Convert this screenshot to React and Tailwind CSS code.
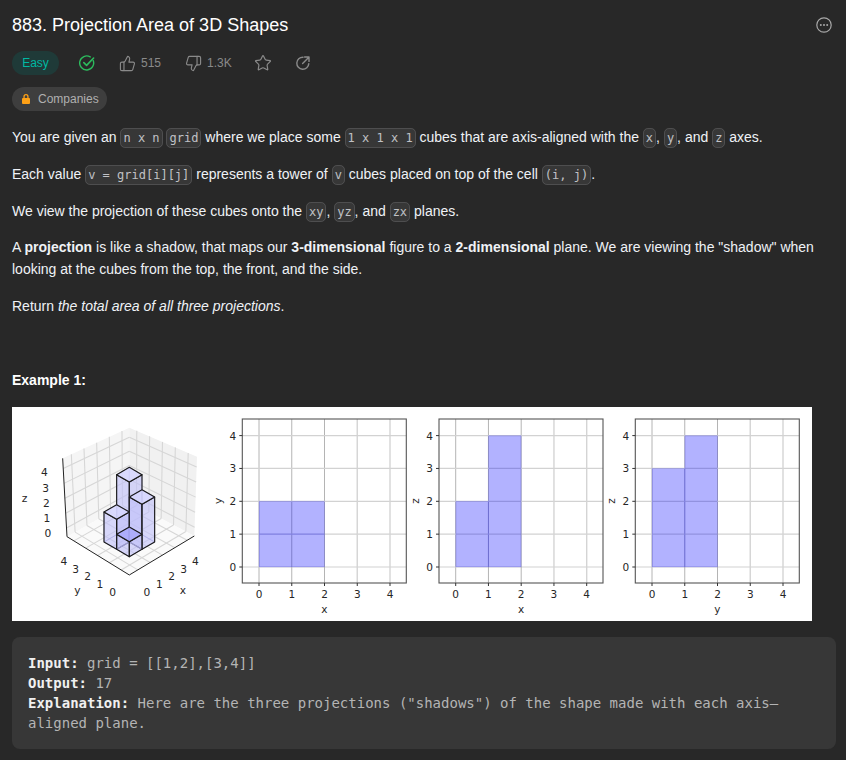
import React from 'react';
import { ThumbsUp, ThumbsDown, Star } from 'lucide-react';

const mix = (a, b, t) => [a[0] + (b[0] - a[0]) * t, a[1] + (b[1] - a[1]) * t];
const FRACS = [0.11, 0.3, 0.49, 0.68, 0.87];

// 3d plot is written in zoomed reference coordinates (3x)
const project = (x, y, z) => [352 + 38 * (x - y), 455 - 22 * (x + y) - 45 * z];
const pts = (list) => list.map((p) => p.join(',')).join(' ');

const Bar = ({ x, y, h, top = '#d8d8ff' }) => {
  const p = (a, b, c) => project(x + a, y + b, c);
  const back = [
    [p(0, 0, 0), p(1, 0, 0), p(1, 1, 0), p(0, 1, 0)],
    [p(0, 1, 0), p(1, 1, 0), p(1, 1, h), p(0, 1, h)],
    [p(1, 0, 0), p(1, 1, 0), p(1, 1, h), p(1, 0, h)],
  ];
  const front = [
    [p(0, 0, 0), p(0, 1, 0), p(0, 1, h), p(0, 0, h)],
    [p(0, 0, 0), p(1, 0, 0), p(1, 0, h), p(0, 0, h)],
  ];
  return (
    <g>
      {back.map((f, i) => (
        <polygon key={i} points={pts(f)} fill="#b4b4fa" fillOpacity="0.3" stroke="#8f8fd0" strokeWidth="1.5" />
      ))}
      {front.map((f, i) => (
        <polygon key={i} points={pts(f)} fill="#c4c4fa" fillOpacity="0.42" stroke="#1a1a1a" strokeWidth="3.4" strokeLinejoin="round" />
      ))}
      <polygon points={pts([p(0, 0, h), p(1, 0, h), p(1, 1, h), p(0, 1, h)])} fill={top} fillOpacity="0.85" stroke="#1a1a1a" strokeWidth="3.4" strokeLinejoin="round" />
    </g>
  );
};

const Plot3D = () => {
  const back = [352, 290];
  const top = [352, 68];
  const left = [165, 395];
  const leftTop = [152, 160];
  const right = [547, 393];
  const rightTop = [555, 155];
  const front = [352, 510];
  const grid = [];
  FRACS.forEach((t) => {
    // floor
    grid.push([mix(back, right, t), mix(left, front, t)]);
    grid.push([mix(back, left, t), mix(right, front, t)]);
    // walls, verticals
    grid.push([mix(back, left, t), mix(top, leftTop, t)]);
    grid.push([mix(back, right, t), mix(top, rightTop, t)]);
    // walls, horizontals
    grid.push([mix(left, leftTop, t), mix(back, top, t)]);
    grid.push([mix(right, rightTop, t), mix(back, top, t)]);
  });
  const tick = { fontSize: 32, fill: '#262626' };
  return (
    <g transform="translate(0,-2) scale(0.3333)">
      <polygon points={pts([left, back, top, leftTop])} fill="#f5f5f5" />
      <polygon points={pts([right, back, top, rightTop])} fill="#f1f1f1" />
      <polygon points={pts([left, back, right, front])} fill="#fafafa" />
      {grid.map(([a, b], i) => (
        <line key={i} x1={a[0]} y1={a[1]} x2={b[0]} y2={b[1]} stroke="#d6d6d6" strokeWidth="3.2" />
      ))}
      <polyline points={pts([leftTop, left, front, right])} fill="none" stroke="#222" strokeWidth="3" />
      <Bar x={1} y={1} h={4} />
      <Bar x={0} y={1} h={2} />
      <Bar x={1} y={0} h={3} />
      <Bar x={0} y={0} h={1} top="#a9a9fb" />
      {[['0', 108, 395], ['1', 105, 351], ['2', 103, 307], ['3', 101, 261], ['4', 97, 214]].map(([t, x, y]) => (
        <text key={t + 'z'} x={x} y={y} textAnchor="middle" {...tick}>{t}</text>
      ))}
      <text x={38} y={292} textAnchor="middle" {...tick}>z</text>
      {[['4', 156, 480], ['3', 191, 503], ['2', 227, 526], ['1', 264, 548], ['0', 302, 572]].map(([t, x, y]) => (
        <text key={t + 'y'} x={x} y={y} textAnchor="middle" {...tick}>{t}</text>
      ))}
      <text x={196} y={568} textAnchor="middle" {...tick}>y</text>
      {[['0', 405, 572], ['1', 442, 548], ['2', 479, 526], ['3', 515, 503], ['4', 550, 480]].map(([t, x, y]) => (
        <text key={t + 'x'} x={x} y={y} textAnchor="middle" {...tick}>{t}</text>
      ))}
      <text x={513} y={566} textAnchor="middle" {...tick}>x</text>
    </g>
  );
};

const Plot2D = ({ left, xLabel, yLabel, bars }) => {
  const tx = (v) => left + 16.7 + v * 32.75;
  const ty = (v) => 160 - v * 32.85;
  const ticks = [0, 1, 2, 3, 4];
  return (
    <g>
      <rect x={left} y={12} width={164} height={164} fill="#fff" />
      {ticks.map((t) => (
        <g key={t} fill="none">
          <line x1={tx(t)} y1={12} x2={tx(t)} y2={176} stroke={t < 3 ? '#b4b4b4' : '#d4d4d4'} strokeWidth={t < 3 ? 1 : 1.4} />
          <line x1={left} y1={ty(t)} x2={left + 164} y2={ty(t)} stroke="#d2d2d2" strokeWidth="1.2" />
        </g>
      ))}
      {bars.map(([x, w, h, y0 = 0], i) => (
        <rect
          key={i}
          x={tx(x)}
          y={ty(y0 + h)}
          width={w * 32.75}
          height={h * 32.85}
          fill="#0000ff"
          fillOpacity="0.3"
          stroke="#0000ff"
          strokeOpacity="0.08"
        />
      ))}
      <rect x={left} y={12} width={164} height={164} fill="none" stroke="#555" strokeWidth="1.1" />
      {ticks.map((t) => (
        <g key={t} fontSize="10.5" fill="#262626">
          <line x1={tx(t)} y1={176} x2={tx(t)} y2={179} stroke="#333" />
          <line x1={left - 3} y1={ty(t)} x2={left} y2={ty(t)} stroke="#333" />
          <text x={tx(t)} y={191} textAnchor="middle">{t}</text>
          <text x={left - 6} y={ty(t) + 4} textAnchor="end">{t}</text>
        </g>
      ))}
      <text x={left + 82} y={206} textAnchor="middle" fontSize="10.5" fill="#262626">{xLabel}</text>
      <text
        x={left - 20}
        y={94}
        textAnchor="middle"
        fontSize="10.5"
        fill="#262626"
        transform={`rotate(-90 ${left - 20} 94)`}
      >
        {yLabel}
      </text>
    </g>
  );
};

const Figure = () => (
  <svg width="800" height="214" viewBox="0 0 800 214" className="block bg-white" style={{ fontFamily: '"DejaVu Sans", sans-serif' }}>
    <Plot3D />
    <Plot2D left={230.3} xLabel="x" yLabel="y" bars={[[0, 2, 1, 0], [0, 2, 1, 1]]} />
    <Plot2D left={427} xLabel="x" yLabel="z" bars={[[0, 1, 2], [1, 1, 4]]} />
    <Plot2D left={623.3} xLabel="y" yLabel="z" bars={[[0, 1, 3], [1, 1, 4]]} />
  </svg>
);

const Code = ({ children }) => (
  <code className="rounded-[5px] border border-[#f7faff1f] bg-[#ffffff12] px-[2px] py-[2px] font-['DejaVu_Sans_Mono',monospace] text-xs leading-4 text-[#eff1f6bf]">
    {children}
  </code>
);

export default function App() {
  return (
    <div className="min-h-[760px] bg-[#282828] pl-3 pr-[10px] font-['Liberation_Sans',Arial,sans-serif] text-sm leading-[22px] text-[#eff2f6]">
      <div className="flex h-[51px] items-center justify-between pb-[2px] pr-1">
        <h1 className="text-lg font-normal text-white">883. Projection Area of 3D Shapes</h1>
        <svg width="16" height="16" viewBox="0 0 16 16" fill="none" className="text-[#a8a8a8]">
          <circle cx="8" cy="8" r="7.2" stroke="currentColor" strokeWidth="1.2" />
          <circle cx="4.8" cy="8" r="1" fill="currentColor" />
          <circle cx="8" cy="8" r="1" fill="currentColor" />
          <circle cx="11.2" cy="8" r="1" fill="currentColor" />
        </svg>
      </div>

      <div className="flex h-6 items-center text-xs text-[#8a8a8a]">
        <span className="flex h-6 w-[47px] items-center justify-center rounded-full bg-[#1f3a38] text-[#00b8a3]">Easy</span>
        <svg width="16" height="16" viewBox="0 0 16 16" fill="none" className="ml-5 text-[#2cbb5d]">
          <path d="M14.2 5.4A7 7 0 1 1 11.2 1.9" stroke="currentColor" strokeWidth="1.4" strokeLinecap="round" />
          <path d="M4.8 7.6 7.6 10.4 14.6 3" stroke="currentColor" strokeWidth="1.6" strokeLinecap="round" strokeLinejoin="round" />
        </svg>
        <ThumbsUp size={17} strokeWidth={1.6} className="ml-[24px]" />
        <span className="ml-[5px]">515</span>
        <ThumbsDown size={17} strokeWidth={1.6} className="ml-[24px]" />
        <span className="ml-[5px]">1.3K</span>
        <Star size={18} strokeWidth={1.6} className="ml-[22px]" />
        <svg width="16" height="16" viewBox="0 0 16 16" fill="none" className="ml-[23px]">
          <path d="M13.8 8.6A6 6 0 1 1 8 2.2" stroke="currentColor" strokeWidth="1.4" strokeLinecap="round" />
          <path d="M7.6 8.4 13.6 2.4M9.6 2h4.4v4.4" stroke="currentColor" strokeWidth="1.4" strokeLinecap="round" strokeLinejoin="round" />
        </svg>
      </div>

      <div className="mt-3 flex h-6 w-[95px] items-center gap-[6px] rounded-full bg-[#3e3e3e] pl-2 text-xs text-[#b0b0b0]">
        <svg width="12" height="12" viewBox="0 0 12 12" className="text-[#ffa116]" fill="currentColor">
          <path d="M3.4 5V3.6a2.6 2.6 0 0 1 5.2 0V5h.4a1 1 0 0 1 1 1v4a1 1 0 0 1-1 1H3a1 1 0 0 1-1-1V6a1 1 0 0 1 1-1h.4Zm1.3 0h2.6V3.6a1.3 1.3 0 0 0-2.6 0V5Z" />
        </svg>
        Companies
      </div>

      <div className="mt-[15px]">
        <p className="mb-[15px]">
          You are given an <Code>n x n</Code> <Code>grid</Code> where we place some <Code>1 x 1 x 1</Code> cubes that are axis-aligned with the <Code>x</Code>, <Code>y</Code>, and <Code>z</Code> axes.
        </p>
        <p className="mb-[15px]">
          Each value <Code>v = grid[i][j]</Code> represents a tower of <Code>v</Code> cubes placed on top of the cell <Code>(i, j)</Code>.
        </p>
        <p className="mb-[14px]">
          We view the projection of these cubes onto the <Code>xy</Code>, <Code>yz</Code>, and <Code>zx</Code> planes.
        </p>
        <p className="mb-[15px]">
          A <strong>projection</strong> is like a shadow, that maps our <strong>3-dimensional</strong> figure to a <strong>2-dimensional</strong> plane. We are viewing the "shadow" when looking at the cubes from the top, the front, and the side.
        </p>
        <p className="mb-[15px]">
          Return <em>the total area of all three projections</em>.
        </p>
      </div>

      <p className="mt-[52px] font-bold text-white">Example 1:</p>

      <div className="mt-[16px]">
        <Figure />
      </div>

      <pre className="mt-4 whitespace-pre-wrap rounded-lg bg-[#373737] p-4 font-['DejaVu_Sans_Mono',monospace] text-sm leading-5 text-[#b4b4b4]">
        <strong className="text-[#f0f0f0]">Input:</strong> grid = [[1,2],[3,4]]{'\n'}
        <strong className="text-[#f0f0f0]">Output:</strong> 17{'\n'}
        <strong className="text-[#f0f0f0]">Explanation:</strong> Here are the three projections ("shadows") of the shape made with each axis–aligned plane.
      </pre>
    </div>
  );
}
